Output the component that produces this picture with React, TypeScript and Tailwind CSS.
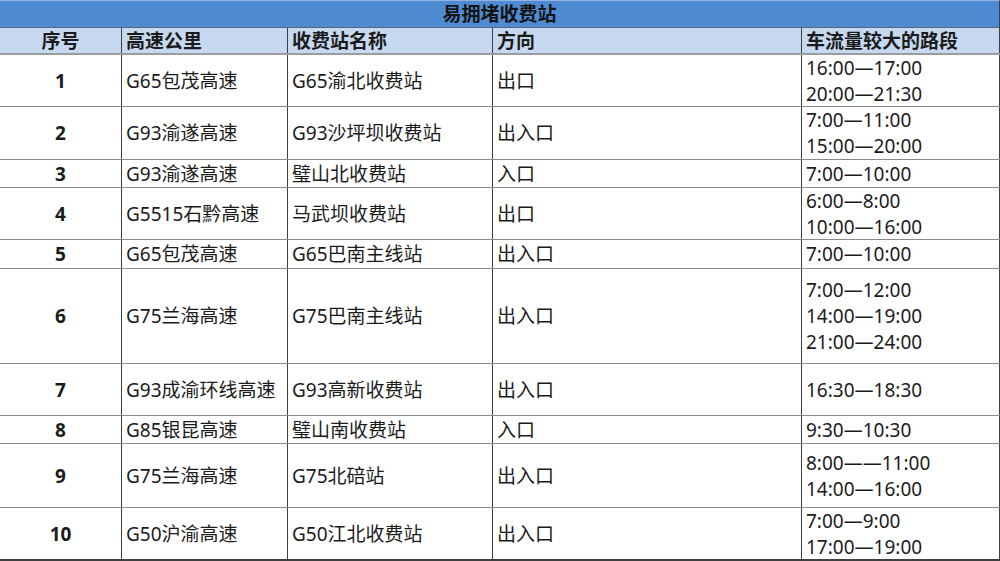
const rows: Array<{ no: string; road: string; station: string; dir: string; times: string[]; h: string }> = [
  { no: '1', road: 'G65包茂高速', station: 'G65渝北收费站', dir: '出口', times: ['16:00—17:00', '20:00—21:30'], h: 'h-[52px]' },
  { no: '2', road: 'G93渝遂高速', station: 'G93沙坪坝收费站', dir: '出入口', times: ['7:00—11:00', '15:00—20:00'], h: 'h-[53px]' },
  { no: '3', road: 'G93渝遂高速', station: '璧山北收费站', dir: '入口', times: ['7:00—10:00'], h: 'h-[28px]' },
  { no: '4', road: 'G5515石黔高速', station: '马武坝收费站', dir: '出口', times: ['6:00—8:00', '10:00—16:00'], h: 'h-[52px]' },
  { no: '5', road: 'G65包茂高速', station: 'G65巴南主线站', dir: '出入口', times: ['7:00—10:00'], h: 'h-[29px]' },
  { no: '6', road: 'G75兰海高速', station: 'G75巴南主线站', dir: '出入口', times: ['7:00—12:00', '14:00—19:00', '21:00—24:00'], h: 'h-[95px]' },
  { no: '7', road: 'G93成渝环线高速', station: 'G93高新收费站', dir: '出入口', times: ['16:30—18:30'], h: 'h-[52px]' },
  { no: '8', road: 'G85银昆高速', station: '璧山南收费站', dir: '入口', times: ['9:30—10:30'], h: 'h-[28px]' },
  { no: '9', road: 'G75兰海高速', station: 'G75北碚站', dir: '出入口', times: ['8:00——11:00', '14:00—16:00'], h: 'h-[64px]' },
  { no: '10', road: 'G50沪渝高速', station: 'G50江北收费站', dir: '出入口', times: ['7:00—9:00', '17:00—19:00'], h: 'h-[53px]' },
]

const cell = 'flex items-center border-r border-[#3f3f3f] px-[4px] whitespace-nowrap'

export default function App() {
  return (
    <div className="w-[1000px] h-[561px] overflow-hidden bg-white font-['Noto_Sans','Noto_Sans_CJK_SC',sans-serif] text-[19px] leading-[26px] text-[#1b1b1b]">
      <div className="flex h-[28px] items-center justify-center border-t border-b border-r border-t-[#93b4e0] border-b-[#56677c] border-r-[#3f3f3f] bg-[#4f8bd2] text-[19px] font-bold text-[#141414]">
        易拥堵收费站
      </div>
      <div className="flex h-[27px] border-b-2 border-[#9c9c9c] bg-[#c6d9f0] font-bold">
        <div className={`${cell} w-[122px] justify-center`}>序号</div>
        <div className={`${cell} w-[166px]`}>高速公里</div>
        <div className={`${cell} w-[205px]`}>收费站名称</div>
        <div className={`${cell} w-[309px]`}>方向</div>
        <div className={`${cell} flex-1`}>车流量较大的路段</div>
      </div>
      {rows.map((r, i) => (
        <div
          key={r.no}
          className={`flex box-border ${r.h} ${i === rows.length - 1 ? 'border-b-2 border-[#3f3f3f]' : 'border-b border-[#8a8a8a]'}`}
        >
          <div className={`${cell} w-[122px] justify-center font-bold`}>{r.no}</div>
          <div className={`${cell} w-[166px]`}>{r.road}</div>
          <div className={`${cell} w-[205px]`}>{r.station}</div>
          <div className={`${cell} w-[309px]`}>{r.dir}</div>
          <div className={`${cell} flex-1 flex-col items-start justify-center`}>
            {r.times.map((t) => (
              <div key={t}>{t}</div>
            ))}
          </div>
        </div>
      ))}
    </div>
  )
}
